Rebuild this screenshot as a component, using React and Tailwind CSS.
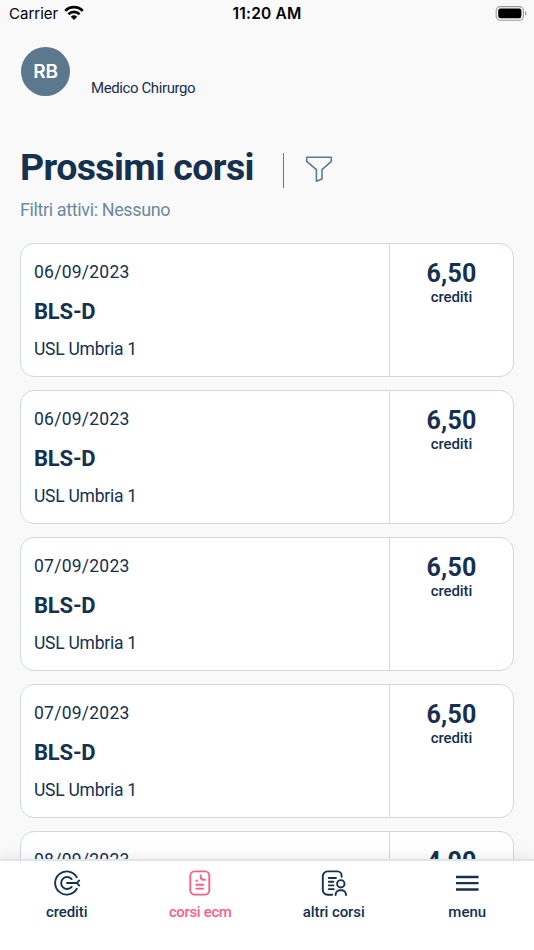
const courses = [
  { date: '06/09/2023', title: 'BLS-D', place: 'USL Umbria 1', credits: '6,50' },
  { date: '06/09/2023', title: 'BLS-D', place: 'USL Umbria 1', credits: '6,50' },
  { date: '07/09/2023', title: 'BLS-D', place: 'USL Umbria 1', credits: '6,50' },
  { date: '07/09/2023', title: 'BLS-D', place: 'USL Umbria 1', credits: '6,50' },
  { date: '08/09/2023', title: 'BLS-D', place: 'USL Umbria 1', credits: '4,00' },
];

function StatusBar() {
  return (
    <div className="flex h-[28px] shrink-0 items-start justify-between pl-[8px] pr-[8px] font-['Inter',sans-serif] text-black">
      <div className="flex w-[100px] items-start gap-[6px] pl-px">
        <span className="text-[15px] leading-[27px] tracking-[0px]">Carrier</span>
        <svg className="mt-[5px]" width="20" height="16" viewBox="0 0 20 16" fill="none" stroke="#000" strokeWidth="2.6">
          <path d="M1.2 5.9C6.2 .8 13.8 .8 18.8 5.9" />
          <path d="M4.4 9.2C7.6 6.1 12.4 6.1 15.6 9.2" />
          <path d="M6.8 11.7C8.7 9.9 11.3 9.9 13.2 11.7L10 15Z" fill="#000" stroke="none" />
        </svg>
      </div>
      <span className="text-[15.5px] font-semibold leading-[27px] tracking-[0.2px]">11:20 AM</span>
      <div className="flex w-[100px] justify-end pt-[6px]">
        <svg className="-mr-px" width="32" height="15" viewBox="0 0 32 15">
          <rect x="1.2" y=".6" width="27.2" height="13.6" rx="4" fill="none" stroke="#999" strokeWidth="1.1" />
          <rect x="3.2" y="2.6" width="23.2" height="9.6" rx="2.2" fill="#000" />
          <path d="M30.1 5v4.8c1.8-.8 1.8-4 0-4.8Z" fill="#999" />
        </svg>
      </div>
    </div>
  );
}

function CourseCard({ course }) {
  return (
    <article className="flex h-[134px] shrink-0 overflow-hidden rounded-[14px] border border-[#cddae4] bg-white">
      <div className="flex w-[369px] flex-col items-start border-r border-[#cddae4] pl-[13px] pt-[16px]">
        <span className="text-[17.5px] leading-[24px] tracking-[0.25px]">{course.date}</span>
        <span className="mt-[14px] text-[22px] font-bold leading-[28px] tracking-[-0.2px]">{course.title}</span>
        <span className="mt-[11px] text-[17.5px] leading-[24px] tracking-[-0.25px]">{course.place}</span>
      </div>
      <div className="flex flex-1 flex-col items-center pt-[16px]">
        <span className="text-[25px] font-bold leading-[28px] tracking-[0.2px]">{course.credits}</span>
        <span className="-mt-px text-[15px] font-medium leading-[20px] tracking-[-0.1px]">crediti</span>
      </div>
    </article>
  );
}

function CreditsIcon() {
  return (
    <svg width="28" height="28" viewBox="0 0 28 28" fill="none" stroke="currentColor" strokeWidth="1.9" strokeLinecap="round">
      <path d="M23.8 8.2A11.6 11.6 0 1 0 23.8 19.8" />
      <path d="M18.7 10.1A6 6 0 1 0 18.7 17.9" />
      <path d="M14 14h10M26.2 11.4 24 14l2.2 2.6" />
    </svg>
  );
}

function CourseIcon() {
  return (
    <svg width="28" height="28" viewBox="0 0 28 28" fill="none" stroke="currentColor" strokeWidth="1.9" strokeLinecap="round">
      <rect x="4.3" y="2.4" width="19" height="23.2" rx="4.4" />
      <path d="M14.7 6.4v1.3a3 3 0 0 0 3 3h1.2" />
      <path d="M10.2 15.8h7M10.2 19.6h7" />
      <circle cx="10.6" cy="11.8" r=".7" fill="currentColor" strokeWidth="1" />
    </svg>
  );
}

function OtherCoursesIcon() {
  return (
    <svg width="28" height="28" viewBox="0 0 28 28" fill="none" stroke="currentColor" strokeWidth="1.9" strokeLinecap="round">
      <path d="M21.6 7.8V6.6a4.2 4.2 0 0 0-4.2-4.2H7.6a4.8 4.8 0 0 0-4.8 4.8V21a4.8 4.8 0 0 0 4.8 4.8h4.6" />
      <path d="M8.8 9h7.2M8.8 12.7h4.6M8.8 16.4h4.6M8.8 20.1h5" />
      <circle cx="20.8" cy="14.8" r="3.7" />
      <path d="M15.6 26v-.5a4.6 4.6 0 0 1 4.6-4.3h1.2a4.6 4.6 0 0 1 4.6 4.3v.5" />
    </svg>
  );
}

function MenuIcon() {
  return (
    <svg width="28" height="28" viewBox="0 0 28 28" fill="none" stroke="currentColor" strokeWidth="2.3">
      <path d="M3 8h22.6M3 14.2h22.6M3 20.5h22.6" />
    </svg>
  );
}

const tabs = [
  { label: 'crediti', icon: <CreditsIcon />, spacing: 'tracking-[-0.1px]' },
  { label: 'corsi ecm', icon: <CourseIcon />, spacing: 'tracking-[-0.35px]', active: true },
  { label: 'altri corsi', icon: <OtherCoursesIcon />, spacing: 'tracking-[-0.1px]' },
  { label: 'menu', icon: <MenuIcon />, spacing: 'tracking-[0px]' },
];

export default function App() {
  return (
    <div className="flex h-[950px] w-[534px] flex-col overflow-hidden bg-[#f9f9f9] font-['Roboto',sans-serif] text-[#15314f]">
      <StatusBar />
      <header className="flex shrink-0 items-start pl-[21px] pt-[19px]">
        <div className="flex size-[49px] items-center justify-center rounded-full bg-[#5b788e] pt-[2px] font-['Inter',sans-serif] text-[19px] font-semibold text-white">
          <span className="tracking-[-0.2px]">RB</span>
        </div>
        <span className="ml-[21px] mt-[31px] text-[15px] leading-[20px] tracking-[-0.4px]">Medico Chirurgo</span>
      </header>
      <div className="mt-[46px] flex h-[48px] shrink-0 items-start pl-[20px]">
        <h1 className="-mt-px w-[262px] whitespace-nowrap text-[37.5px] font-bold leading-[48px] tracking-[-0.6px]">Prossimi corsi</h1>
        <div className="ml-[1px] mt-[9px] h-[35px] w-px bg-[#5b788e]" />
        <svg className="ml-[21px] mt-[11px]" width="29" height="29" viewBox="0 0 30 30" fill="none" stroke="#5b788e" strokeWidth="1.6" strokeLinejoin="round">
          <path d="M1.8 2.4H27.2V6.6L17.6 15.2V24.8L11.8 27.2V15.2L1.8 6.6Z" />
        </svg>
      </div>
      <p className="ml-[20px] mt-[6px] shrink-0 text-[18px] leading-[24px] tracking-[-0.38px] text-[#6d899d]">Filtri attivi: Nessuno</p>
      <main className="mt-[21px] flex min-h-0 flex-1 flex-col gap-[13px] overflow-hidden px-[20px]">
        {courses.map((c, i) => <CourseCard key={i} course={c} />)}
      </main>
      <nav className="relative grid h-[91px] shrink-0 grid-cols-4 border-t-2 border-[#dde4eb] bg-white shadow-[0_-3px_12px_rgba(0,0,0,0.07)]">
        {tabs.map((t) => (
          <div key={t.label} className={`flex flex-col items-center pt-[8px] ${t.active ? 'text-[#fa5f86]' : ''}`}>
            {t.icon}
            <span className={`mt-[5px] text-[15px] font-medium leading-[20px] ${t.spacing}`}>{t.label}</span>
          </div>
        ))}
      </nav>
    </div>
  );
}
